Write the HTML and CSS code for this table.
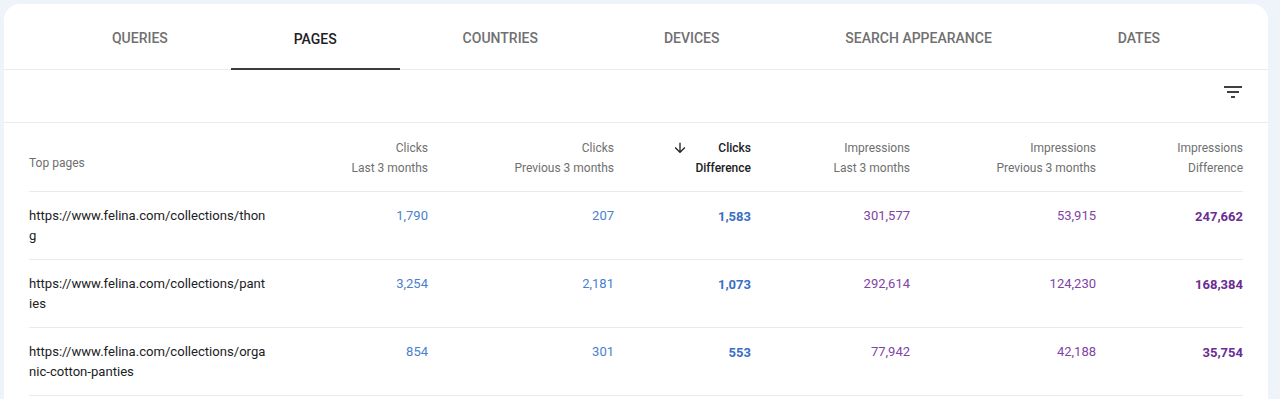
FILE: index.html
```html
<!DOCTYPE html>
<html lang="en">
<head>
<meta charset="utf-8">
<title>Top pages</title>
<link rel="stylesheet" href="styles.css">
</head>
<body>
<div class="page">
  <div class="card">
    <nav class="tabs">
      <div class="tab">Queries</div>
      <div class="tab active">Pages</div>
      <div class="tab">Countries</div>
      <div class="tab">Devices</div>
      <div class="tab">Search appearance</div>
      <div class="tab">Dates</div>
    </nav>
    <div class="toolbar">
      <svg class="filter" viewBox="0 0 24 24" width="24" height="24"><path d="M10 18h4v-2h-4v2zM3 6v2h18V6H3zm3 7h12v-2H6v2z"/></svg>
    </div>
    <div class="table">
      <div class="row head">
        <div class="cell first toplabel">Top pages</div>
        <div class="cell">Clicks<br>Last 3 months</div>
        <div class="cell">Clicks<br>Previous 3 months</div>
        <div class="cell sorted">
          <svg class="arrow" viewBox="0 0 24 24" width="16" height="16"><path d="M20 12l-1.41-1.41L13 16.17V4h-2v12.17l-5.58-5.59L4 12l8 8 8-8z"/></svg>
          <span>Clicks<br>Difference</span>
        </div>
        <div class="cell">Impressions<br>Last 3 months</div>
        <div class="cell">Impressions<br>Previous 3 months</div>
        <div class="cell">Impressions<br>Difference</div>
      </div>
      <div class="row">
        <div class="cell first url">https://www.felina.com/collections/thong</div>
        <div class="cell clicks">1,790</div>
        <div class="cell clicks">207</div>
        <div class="cell clicks bold">1,583</div>
        <div class="cell impr">301,577</div>
        <div class="cell impr">53,915</div>
        <div class="cell impr bold">247,662</div>
      </div>
      <div class="row">
        <div class="cell first url">https://www.felina.com/collections/panties</div>
        <div class="cell clicks">3,254</div>
        <div class="cell clicks">2,181</div>
        <div class="cell clicks bold">1,073</div>
        <div class="cell impr">292,614</div>
        <div class="cell impr">124,230</div>
        <div class="cell impr bold">168,384</div>
      </div>
      <div class="row">
        <div class="cell first url">https://www.felina.com/collections/organic-cotton-panties</div>
        <div class="cell clicks">854</div>
        <div class="cell clicks">301</div>
        <div class="cell clicks bold">553</div>
        <div class="cell impr">77,942</div>
        <div class="cell impr">42,188</div>
        <div class="cell impr bold">35,754</div>
      </div>
    </div>
  </div>
</div>
</body>
</html>
```
FILE: styles.css
```css
* { box-sizing: border-box; }
html, body {
  margin: 0;
  padding: 0;
  background: #eff3fa;
  font-family: Roboto, "Liberation Sans", Arial, sans-serif;
  color: #202124;
}
.page {
  padding: 4px 12px 0 4px;
  height: 399px;
  overflow: hidden;
}
.card {
  background: #ffffff;
  border-radius: 16px 16px 0 0;
  height: 420px;
}
.tabs {
  display: flex;
  padding: 0 45px;
  height: 66px;
  border-bottom: 1px solid #e8eaed;
}
.tab {
  flex: 1 1 auto;
  display: flex;
  align-items: center;
  justify-content: center;
  padding-top: 5px;
  font-size: 14px;
  font-weight: 500;
  text-transform: uppercase;
  color: #707070;
  border-bottom: 2px solid transparent;
}
.tab.active {
  color: #202124;
  border-bottom-color: #3c3c3c;
  margin-bottom: -1px;
}
.toolbar {
  display: flex;
  justify-content: flex-end;
  padding: 10px 23px 18px;
  height: 53px;
  border-bottom: 1px solid #e8eaed;
}
.filter { fill: #3c4043; display: block; }
.table { padding: 0 25px; }
.row {
  display: grid;
  grid-template-columns: 262px 137px 186px 137px 159px 186px 147px;
  border-bottom: 1px solid #e8eaed;
  height: 68px;
  padding-top: 14px;
  font-size: 13px;
  line-height: 20px;
}
.row.head {
  height: 69px;
  padding-top: 15px;
  font-size: 12px;
  color: #6f6f6f;
}
.cell { text-align: right; }
.cell.first { text-align: left; }
.toplabel { padding-top: 15px; }
.url {
  word-break: break-all;
  font-size: 13.1px;
  max-width: 238px;
  color: #202124;
}
.sorted {
  display: flex;
  justify-content: flex-end;
  align-items: flex-start;
  gap: 7px;
  color: #202124;
  font-weight: 500;
}
.arrow { fill: #202124; margin-top: 2px; }
.clicks { color: #4a7fce; }
.impr { color: #8044a6; }
.clicks.bold { color: #3a6fc4; font-weight: 700; padding-top: 1px; }
.impr.bold { color: #6a2d93; font-weight: 700; padding-top: 1px; }
```
